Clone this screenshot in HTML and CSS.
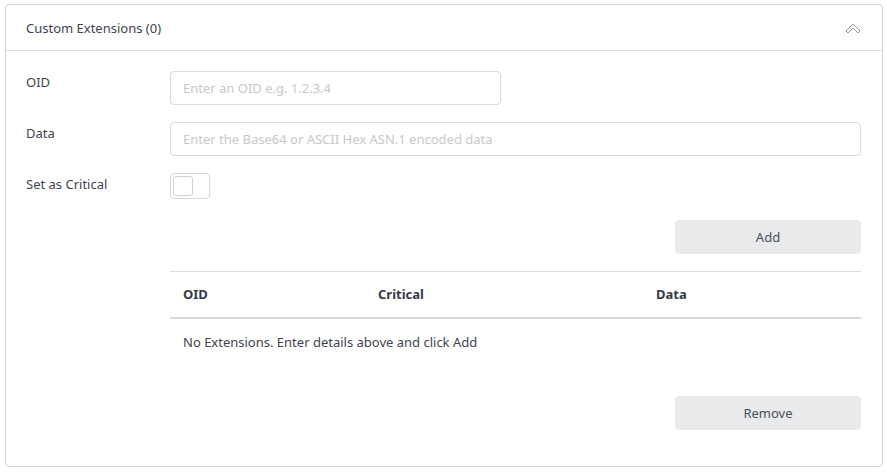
FILE: index.html
```html
<!DOCTYPE html>
<html>
<head>
<meta charset="utf-8">
<link rel="stylesheet" href="styles.css">
</head>
<body>
<div class="card">
  <div class="card-header">
    <span class="title">Custom Extensions (0)</span>
    <svg class="chev" width="16" height="12" viewBox="0 0 16 12">
      <path d="M1 8 L8 1 L15 8 L13 10 L8 5 L3 10 Z" fill="none" stroke="#9a9aa2" stroke-width="1" stroke-linejoin="round"/>
    </svg>
  </div>
  <div class="card-body">
    <div class="row">
      <label class="lbl">OID</label>
      <div class="field"><input class="input short" placeholder="Enter an OID e.g. 1.2.3.4"></div>
    </div>
    <div class="row">
      <label class="lbl">Data</label>
      <div class="field"><input class="input" placeholder="Enter the Base64 or ASCII Hex ASN.1 encoded data"></div>
    </div>
    <div class="row">
      <label class="lbl">Set as Critical</label>
      <div class="field"><div class="toggle"><div class="knob"></div></div></div>
    </div>
    <div class="main">
      <div class="btn-row"><button class="btn">Add</button></div>
      <table class="tbl">
        <thead>
          <tr><th class="c1">OID</th><th class="c2">Critical</th><th class="c3">Data</th></tr>
        </thead>
        <tbody>
          <tr><td colspan="3">No Extensions. Enter details above and click Add</td></tr>
        </tbody>
      </table>
      <div class="btn-row rm"><button class="btn">Remove</button></div>
    </div>
  </div>
</div>
</body>
</html>
```
FILE: styles.css
```css
* { box-sizing: border-box; }
body {
  margin: 0;
  padding: 4px 4px 8px 5px;
  font-family: "Segoe UI", "Noto Sans", sans-serif;
  font-size: 13px;
  color: #3d4450;
  background: #fff;
}
.card {
  width: 878px;
  height: 463px;
  border: 1px solid #d6d6da;
  border-radius: 4px;
}
.card-header {
  height: 46px;
  border-bottom: 1px solid #dcdce0;
  display: flex;
  align-items: center;
  justify-content: space-between;
  padding: 0 20px 0 20px;
}
.title { font-size: 13px; color: #3d4450; }
.chev { margin-top: 2px; margin-right: 1px; }
.card-body { padding: 20px 21px 0 20px; }
.row { display: flex; margin-bottom: 17px; }
.lbl { width: 144px; line-height: 22px; padding-top: 0; }
.field { flex: 1; }
.input {
  display: block;
  width: 100%;
  height: 34px;
  border: 1px solid #d9d9de;
  border-radius: 4px;
  padding: 0 12px;
  font-family: inherit;
  font-size: 13px;
  color: #3d4450;
  outline: none;
}
.input.short { width: 331px; }
.input::placeholder { color: #c8c8cc; }
.toggle {
  width: 40px;
  height: 26px;
  border: 1px solid #d6d6da;
  border-radius: 4px;
  padding: 2px;
}
.knob {
  width: 20px;
  height: 20px;
  border: 1px solid #d0d0d4;
  border-radius: 3px;
}
.main { margin-left: 144px; padding-top: 4px; }
.btn-row { display: flex; justify-content: flex-end; }
.btn {
  width: 186px;
  height: 34px;
  border: none;
  border-radius: 4px;
  background: #e9eaec;
  font-family: inherit;
  font-size: 13px;
  color: #4a505a;
}
.tbl {
  width: 100%;
  border-collapse: collapse;
  margin-top: 17px;
  border-top: 1px solid #dcdce0;
}
.tbl th {
  text-align: left;
  font-weight: bold;
  color: #333a46;
  padding: 0 13px;
  height: 46px;
  border-bottom: 2px solid #d8d8dc;
}
.c1 { width: 195px; }
.c2 { width: 278px; }
.tbl td { padding: 0 13px; height: 47px; }
.rm { margin-top: 31px; }
```
